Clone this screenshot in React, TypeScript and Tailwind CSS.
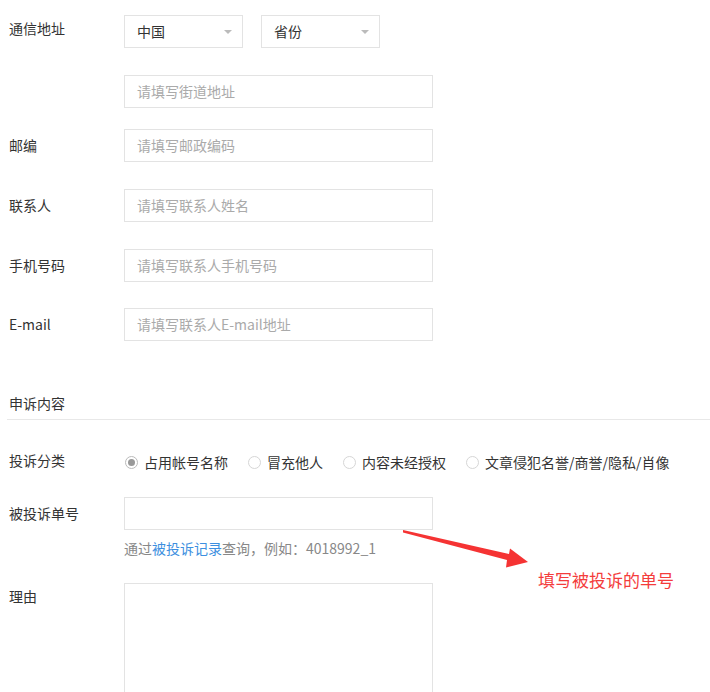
import { ReactNode } from "react";

const font = { fontFamily: '"Noto Sans CJK SC", "Noto Sans", sans-serif' };

function Row({ label, children, className = "", labelClass = "" }: { label?: string; children: ReactNode; className?: string; labelClass?: string }) {
    return (
        <div className={`flex items-center ${className}`}>
            <div className={`w-[115px] shrink-0 text-[14px] text-[#333] ${labelClass}`}>{label}</div>
            {children}
        </div>
    );
}

function TextBox({ placeholder }: { placeholder?: string }) {
    return (
        <div className="w-[309px] h-[33px] border border-[#e3e3e3] flex items-center px-3 text-[14px] text-[#aaa]">
            {placeholder}
        </div>
    );
}

function Select({ value }: { value: string }) {
    return (
        <div className="w-[119px] h-[33px] border border-[#e3e3e3] flex items-center justify-between pl-3 pr-[10px] text-[14px] text-[#333]">
            <span>{value}</span>
            <span className="w-0 h-0 border-l-[4px] border-r-[4px] border-t-[4px] border-l-transparent border-r-transparent border-t-[#bbb]" />
        </div>
    );
}

function Radio({ label, checked }: { label: string; checked?: boolean }) {
    return (
        <label className="flex items-center gap-[6px] text-[14px] text-[#333]">
            <span className={`w-[13px] h-[13px] rounded-full border flex items-center justify-center ${checked ? "border-[#bbb]" : "border-[#d6d6d6]"}`}>
                {checked && <span className="w-[7px] h-[7px] rounded-full bg-[#999]" />}
            </span>
            {label}
        </label>
    );
}

export default function App() {
    return (
        <div className="relative w-[710px] h-[692px] overflow-hidden bg-white" style={font}>
            <div className="pl-[9px] pt-[15px]">
                <Row label="通信地址" className="!items-start" labelClass="pt-[3px]">
                    <div className="flex gap-[18px]">
                        <Select value="中国" />
                        <Select value="省份" />
                    </div>
                </Row>
                <Row className="mt-[27px]">
                    <TextBox placeholder="请填写街道地址" />
                </Row>
                <Row label="邮编" className="mt-[21px]">
                    <TextBox placeholder="请填写邮政编码" />
                </Row>
                <Row label="联系人" className="mt-[27px]">
                    <TextBox placeholder="请填写联系人姓名" />
                </Row>
                <Row label="手机号码" className="mt-[27px]">
                    <TextBox placeholder="请填写联系人手机号码" />
                </Row>
                <Row label="E-mail" className="mt-[26px]">
                    <TextBox placeholder="请填写联系人E-mail地址" />
                </Row>
            </div>

            <div className="mt-[52px] pl-[9px] text-[14px] text-[#333] leading-[20px]">申诉内容</div>
            <div className="ml-[7px] mt-[6px] border-t border-[#e8e8e8]" />

            <div className="pl-[9px]">
                <Row label="投诉分类" className="mt-[32px]" labelClass="-mt-[4px]">
                    <div className="flex items-center gap-[20px] pl-[1px]">
                        <Radio label="占用帐号名称" checked />
                        <Radio label="冒充他人" />
                        <Radio label="内容未经授权" />
                        <Radio label="文章侵犯名誉/商誉/隐私/肖像" />
                    </div>
                </Row>
                <Row label="被投诉单号" className="mt-[24px]">
                    <TextBox />
                </Row>
                <div className="ml-[115px] mt-[8px] text-[14px] text-[#888]">
                    通过<span className="text-[#3d8fe0]">被投诉记录</span>查询，例如：4018992_1
                </div>
                <div className="flex items-start mt-[24px]">
                    <div className="w-[115px] shrink-0 text-[14px] text-[#333] pt-[3px]">理由</div>
                    <div className="w-[309px] h-[140px] border border-[#e3e3e3]" />
                </div>
            </div>

            <svg className="absolute left-0 top-0 pointer-events-none" width="710" height="692" viewBox="0 0 710 692">
                <polygon
                    points="403,530 509,554 510,548.5 528,562 506,567.5 507,560 403,532.5"
                    fill="#f53333"
                />
            </svg>
            <div className="absolute left-[538px] top-[568px] text-[17px] leading-[24px] text-[#f43c3c]">
                填写被投诉的单号
            </div>
        </div>
    );
}
